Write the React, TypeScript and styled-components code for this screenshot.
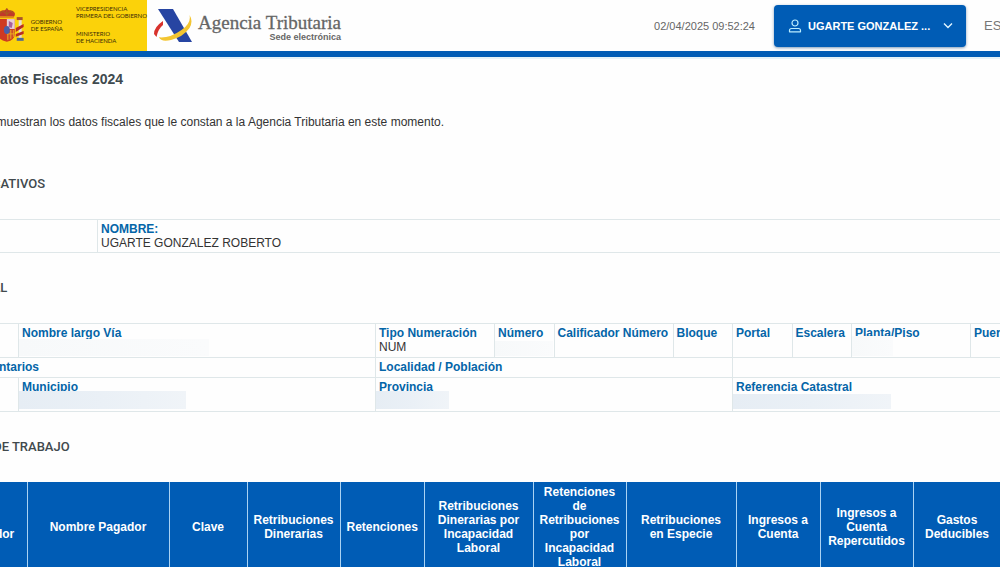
import React from "react";
import styled, { createGlobalStyle } from "styled-components";

const GlobalStyle = createGlobalStyle`
  * { box-sizing: border-box; }
  body {
    margin: 0;
    background: #fefefe;
    color: #333;
    font-family: "Liberation Sans", Arial, sans-serif;
    font-size: 12px;
    overflow: hidden;
  }
`;

/* The page is wider than the window and is shown scrolled to the right. */
const scrolled = 101;

const Viewport = styled.div`
  overflow: hidden;
`;

const Page = styled.div`
  margin-left: -${scrolled}px;
`;

const Header = styled.header`
  display: flex;
  align-items: center;
  height: 59px;
  border-bottom: 2px solid #e4f2f8;
  box-shadow: inset 0 -6px 0 #005cb5;
  padding-bottom: 6px;
`;

const Government = styled.div`
  display: flex;
  flex: none;
  align-items: flex-start;
  width: 248px;
  height: 51px;
  padding: 8px 0 0 94px;
  background: #fbd20a;
  color: #3a2c08;
  font: 6px/7px Lato, sans-serif;
  white-space: nowrap;
`;

const GovernmentName = styled.div`
  margin: 10px 13px 0 7px;
`;

const Ministry = styled.div`
  display: grid;
  gap: 11px;
  margin-top: -3px;
`;

const Agency = styled.a`
  display: flex;
  align-items: center;
  gap: 5px;
  margin-left: 7px;
  color: #666;
  text-decoration: none;
`;

const AgencyText = styled.span`
  display: grid;
  justify-items: end;
  padding-top: 2px;
`;

const AgencyName = styled.span`
  font: 19px/20px "Liberation Serif", serif;
  -webkit-text-stroke: 0.3px #666;
`;

const AgencySite = styled.span`
  font: bold 9px/8px "Liberation Sans", sans-serif;
`;

const Clock = styled.time`
  margin-left: auto;
  color: #666;
  font-size: 11px;
`;

const UserButton = styled.button`
  display: flex;
  align-items: center;
  flex: none;
  width: 192px;
  height: 42px;
  margin: 0 18px 0 19px;
  padding: 0 13px 0 14px;
  border: 0;
  border-radius: 4px;
  background: #005cb5;
  box-shadow: 0 1px 3px rgba(0, 60, 120, 0.5);
  color: #fff;
  font: bold 11px "Liberation Sans", sans-serif;
`;

const UserName = styled.span`
  flex: 1;
  margin-left: 6px;
  text-align: left;
  white-space: nowrap;
`;

const Language = styled.button`
  flex: none;
  width: 16px;
  padding: 0;
  border: 0;
  background: none;
  color: #777;
  font: 13px "Liberation Sans", sans-serif;
  text-align: left;
`;

const Title = styled.h1`
  margin: 10px 0 23px;
  padding-left: 7px;
  color: #3f4a4f;
  font-size: 14px;
  line-height: 20px;
`;

const Intro = styled.p`
  margin: 0 0 42px;
  line-height: 20px;
`;

const SectionTitle = styled.h2`
  margin: 25px 0 25px -2px;
  color: #41494d;
  font: 500 13px/20px Roboto, sans-serif;
`;

const InfoTable = styled.table`
  width: 1191px;
  table-layout: fixed;
  border-collapse: collapse;
  line-height: 14px;
`;

const Cell = styled.td`
  position: relative;
  height: ${(p: { $h?: number }) => p.$h ?? 34}px;
  padding: 2px 3px 0;
  border: 1px solid #dfe7e9;
  vertical-align: top;
  white-space: nowrap;
`;

const Label = styled.strong`
  display: block;
  color: #0465a8;
`;

/* Soft patch that hides a private value. */
const Mask = styled.span<{ $top: number; $w: number; $h: number; $soft?: boolean }>`
  position: absolute;
  left: 0;
  top: ${(p) => p.$top}px;
  width: ${(p) => p.$w}px;
  height: ${(p) => p.$h}px;
  background: ${(p) =>
    p.$soft
      ? "linear-gradient(90deg, #f7f9fa, #fafbfc)"
      : "linear-gradient(90deg, #e6edf4, #eaf0f6 50%, #f0f4f8)"};
`;

const DataTable = styled.table`
  width: 1190px;
  table-layout: fixed;
  border-collapse: collapse;
  background: #005cb5;
  color: #fff;
  line-height: 14px;
`;

const HeadCell = styled.th`
  height: 90px;
  padding: 3px 6px;
  border-right: 1px solid #a9d2f3;
`;

const Spacer = styled.td`
  padding: 0;
`;

const unitColumns = Array.from({ length: 20 }, (_, i) => i);

const incomeColumns: [string, number][] = [
  ["NIF Pagador", 73],
  ["Nombre Pagador", 142],
  ["Clave", 78],
  ["Retribuciones Dinerarias", 93],
  ["Retenciones", 84],
  ["Retribuciones Dinerarias por Incapacidad Laboral", 109],
  ["Retenciones de Retribuciones por Incapacidad Laboral", 93],
  ["Retribuciones en Especie", 110],
  ["Ingresos a Cuenta", 84],
  ["Ingresos a Cuenta Repercutidos", 93],
  ["Gastos Deducibles", 88],
];

function CoatOfArms() {
  return (
    <svg width="31" height="35" viewBox="0 0 31 35" aria-hidden="true">
      <path d="M7 9c-3-4 0-7 5-7l2-2 2 2c5 0 8 3 5 7z" fill="#c0392a" />
      <path d="M7 8h14v2H7z" fill="#e08a1a" />
      <path d="M7 5l3-2 4 3 4-3 3 2M14 0v8" fill="none" stroke="#a8641a" />
      <path d="M5 11h17v15q0 6-8 8-9-2-9-8z" fill="#cf3a22" />
      <path d="M14 11h8v10h-8z" fill="#e8cdd8" />
      <path d="M16 13l4 2-1 5-3-1z" fill="#a8609c" />
      <path d="M14 22h8v4q-1 5-8 7z" fill="#cf4a2a" />
      <path d="M15 22v10M18 22v9M21 22v7M14 26h8" stroke="#e9ab20" />
      <ellipse cx="14" cy="22" rx="3" ry="4" fill="#4a5fa8" />
      <path d="M26 12h3v18h-3z" fill="#e8ddd2" />
      <path d="M24 9h6v3h-6z" fill="#a8552c" />
      <path d="M23 20l8-4v3l-8 5zM23 26l8-3v3l-8 3z" fill="#b92c20" />
      <path d="M24 30h7v3h-7z" fill="#526a91" />
      <path d="M1 12h3v18H1z" fill="#e8ddd2" />
    </svg>
  );
}

function AgencyMark() {
  return (
    <svg width="39" height="36" viewBox="0 0 39 36" aria-hidden="true">
      <path d="M4 1h15l19 33H25z" fill="#2745a2" />
      <path d="M9 13Q0 19 0 26l2.500 3Q4 21 9 17z" fill="#d8322c" />
      <path d="M35.500 7q2 8-8 15Q17 29.500 7 29.500l-2-.5q2 5.500 12 3 12-3 18.500-12Q39.500 13 35.500 7z" fill="#f3c531" />
    </svg>
  );
}

export default function App() {
  return (
    <Viewport>
      <GlobalStyle />
      <Page>
        <Header>
          <Government>
            <CoatOfArms />
            <GovernmentName>
              GOBIERNO
              <br />
              DE ESPAÑA
            </GovernmentName>
            <Ministry>
              <div>
                VICEPRESIDENCIA
                <br />
                PRIMERA DEL GOBIERNO
              </div>
              <div>
                MINISTERIO
                <br />
                DE HACIENDA
              </div>
            </Ministry>
          </Government>
          <Agency href="#inicio">
            <AgencyMark />
            <AgencyText>
              <AgencyName>Agencia Tributaria</AgencyName>
              <AgencySite>Sede electrónica</AgencySite>
            </AgencyText>
          </Agency>
          <Clock>02/04/2025 09:52:24</Clock>
          <UserButton type="button">
            <svg width="14" height="14" viewBox="0 0 14 14" fill="none" stroke="#b9ecff" strokeWidth="1.2" aria-hidden="true">
              <circle cx="7" cy="4" r="3" />
              <path d="M1.500 12.800v-1.300q0-2 2-2h7q2 0 2 2v1.300z" strokeLinejoin="round" />
            </svg>
            <UserName>UGARTE GONZALEZ ...</UserName>
            <svg width="10" height="7" viewBox="0 0 10 7" fill="none" stroke="#e2f6ff" strokeWidth="1.400" aria-hidden="true">
              <path d="M1 1.500l4 4 4-4" />
            </svg>
          </UserButton>
          <Language type="button">ES</Language>
        </Header>

        <main>
          <Title>Consulta de Datos Fiscales 2024</Title>
          <Intro>
            A continuación se muestran los datos fiscales que le constan a la Agencia Tributaria en este momento.
          </Intro>

          <SectionTitle>DATOS IDENTIFICATIVOS</SectionTitle>
          <InfoTable>
            <colgroup>
              <col width={198} />
              <col />
            </colgroup>
            <tbody>
              <tr>
                <Cell $h={33} />
                <Cell $h={33}>
                  <Label>NOMBRE:</Label>
                  UGARTE GONZALEZ ROBERTO
                </Cell>
              </tr>
            </tbody>
          </InfoTable>

          <SectionTitle>DOMICILIO FISCAL</SectionTitle>
          <InfoTable>
            <colgroup>
              {unitColumns.map((i) => (
                <col key={i} />
              ))}
            </colgroup>
            <tbody>
              <tr>
                <Cell colSpan={2} />
                <Cell colSpan={6}>
                  <Label>Nombre largo Vía</Label>
                  <Mask $top={15} $w={190} $h={17} $soft />
                </Cell>
                <Cell colSpan={2}>
                  <Label>Tipo Numeración</Label>
                  NUM
                </Cell>
                <Cell>
                  <Label>Número</Label>
                  <Mask $top={17} $w={58} $h={15} $soft />
                </Cell>
                <Cell colSpan={2}>
                  <Label>Calificador Número</Label>
                </Cell>
                <Cell>
                  <Label>Bloque</Label>
                </Cell>
                <Cell>
                  <Label>Portal</Label>
                </Cell>
                <Cell>
                  <Label>Escalera</Label>
                </Cell>
                <Cell colSpan={2}>
                  <Label>Planta/Piso</Label>
                  <Mask $top={12} $w={41} $h={20} $soft />
                </Cell>
                <Cell colSpan={2}>
                  <Label>Puerta</Label>
                </Cell>
              </tr>
              <tr>
                <Cell colSpan={8} $h={20}>
                  <Label>Datos complementarios</Label>
                </Cell>
                <Cell colSpan={6} $h={20}>
                  <Label>Localidad / Población</Label>
                </Cell>
                <Cell colSpan={6} $h={20} />
              </tr>
              <tr>
                <Cell colSpan={2} />
                <Cell colSpan={6}>
                  <Label>Municipio</Label>
                  <Mask $top={13} $w={167} $h={18} />
                </Cell>
                <Cell colSpan={6}>
                  <Label>Provincia</Label>
                  <Mask $top={13} $w={73} $h={18} />
                </Cell>
                <Cell colSpan={6}>
                  <Label>Referencia Catastral</Label>
                  <Mask $top={16} $w={158} $h={15} />
                </Cell>
              </tr>
            </tbody>
          </InfoTable>

          <SectionTitle>RENDIMIENTOS DE TRABAJO</SectionTitle>
          <DataTable>
            <colgroup>
              <col width={55} />
              {incomeColumns.map(([name, width]) => (
                <col key={name} width={width} />
              ))}
              <col />
            </colgroup>
            <thead>
              <tr>
                <Spacer />
                {incomeColumns.map(([name]) => (
                  <HeadCell key={name} scope="col">
                    {name === "Retribuciones en Especie" ? (
                      <>
                        Retribuciones
                        <br />
                        en Especie
                      </>
                    ) : (
                      name
                    )}
                  </HeadCell>
                ))}
                <Spacer />
              </tr>
            </thead>
          </DataTable>
        </main>
      </Page>
    </Viewport>
  );
}
